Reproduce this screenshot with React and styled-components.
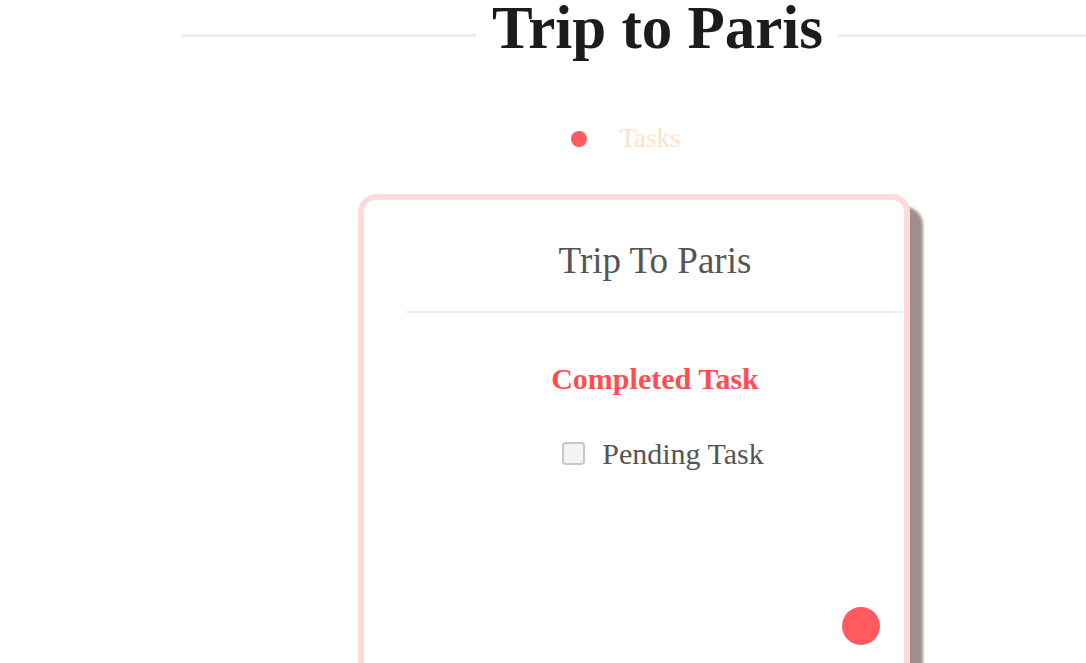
import React from "react";
import styled, { createGlobalStyle } from "styled-components";

const GlobalStyle = createGlobalStyle`
  html, body {
    margin: 0;
    padding: 0;
    background: #ffffff;
    overflow: hidden;
  }
  body {
    font-family: "Liberation Serif", "Times New Roman", serif;
  }
`;

const Page = styled.div`
  display: flex;
  flex-direction: column;
  width: 1086px;
  height: 663px;
  overflow: hidden;
`;

const Header = styled.header`
  display: flex;
  align-items: center;
  gap: 16px;
  margin: -7px 0 0 181px;
  width: 953px;
  flex-shrink: 0;
`;

const Rule = styled.div`
  flex: 1;
  height: 3px;
  margin-top: 14px;
  background: #ececec;
`;

const Title = styled.h1`
  margin: 0;
  font-size: 61px;
  line-height: 70px;
  font-weight: bold;
  color: #1c1c1c;
  white-space: nowrap;
`;

const Main = styled.main`
  display: flex;
  flex-direction: column;
  align-items: center;
  margin-left: 358px;
  width: 552px;
`;

const Tabs = styled.nav`
  display: flex;
  align-items: center;
  gap: 32px;
  margin-top: 60px;
  padding-right: 16px;
`;

const Dot = styled.span`
  width: 16px;
  height: 16px;
  border-radius: 50%;
  background: #ff5a5f;
`;

const TabLabel = styled.span`
  font-size: 27px;
  color: #ffe2c8;
`;

const Card = styled.section`
  position: relative;
  box-sizing: border-box;
  width: 552px;
  height: 520px;
  margin-top: 40px;
  border: 6px solid #ffdadd;
  border-radius: 18px;
  background: #fff;
  box-shadow: 13px 13px 3px #a08e8e;
  padding: 40px 0 0 42px;
  display: flex;
  flex-direction: column;
  align-items: center;
`;

const CardTitle = styled.h2`
  margin: 0;
  font-size: 37px;
  line-height: 42px;
  font-weight: normal;
  color: #555555;
`;

const Divider = styled.hr`
  align-self: stretch;
  border: none;
  height: 2px;
  background: #eeeeee;
  margin: 29px 0 0 0;
`;

const TaskList = styled.ul`
  list-style: none;
  margin: 48px 0 0 0;
  padding: 0;
  display: flex;
  flex-direction: column;
  align-items: center;
  gap: 40px;
`;

const Task = styled.li`
  display: flex;
  align-items: center;
  gap: 17px;
  font-size: 30px;
  line-height: 35px;
  font-weight: ${(p) => (p.$done ? "bold" : "normal")};
  color: ${(p) => (p.$done ? "#ff4d52" : "#555555")};
  margin-left: ${(p) => (p.$done ? "0" : "16px")};
`;

const Check = styled.span`
  width: 19px;
  height: 19px;
  border: 2px solid #c8c8c8;
  border-radius: 4px;
  background: #f4f4f4;
`;

const Fab = styled.button`
  position: absolute;
  top: 407px;
  right: 24px;
  width: 38px;
  height: 38px;
  border-radius: 50%;
  border: none;
  background: #ff5a5f;
  padding: 0;
`;

export default function App() {
  return (
    <>
      <GlobalStyle />
      <Page>
        <Header>
          <Rule />
          <Title>Trip to Paris</Title>
          <Rule />
        </Header>
        <Main>
          <Tabs>
            <Dot />
            <TabLabel>Tasks</TabLabel>
          </Tabs>
          <Card>
            <CardTitle>Trip To Paris</CardTitle>
            <Divider />
            <TaskList>
              <Task $done>Completed Task</Task>
              <Task>
                <Check />
                Pending Task
              </Task>
            </TaskList>
            <Fab aria-label="add" />
          </Card>
        </Main>
      </Page>
    </>
  );
}
